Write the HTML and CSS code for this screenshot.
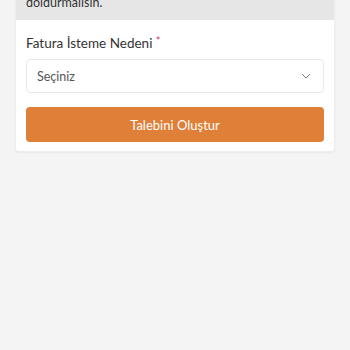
FILE: index.html
```html
<!DOCTYPE html>
<html lang="tr">
<head>
<meta charset="utf-8">
<link rel="stylesheet" href="styles.css">
</head>
<body>
<div class="card">
  <div class="notice"><p>Fatura talebinde bulunmak için aşağıdaki formu doldurmalısın.</p></div>
  <div class="form">
    <label class="label">Fatura İsteme Nedeni <span class="req">*</span></label>
    <div class="select">
      <span>Seçiniz</span>
      <svg class="chev" width="10" height="6" viewBox="0 0 10 6"><path d="M1 1l4 4 4-4" fill="none" stroke="#888" stroke-width="1"/></svg>
    </div>
    <button class="btn">Talebini Oluştur</button>
  </div>
</div>
</body>
</html>
```
FILE: styles.css
```css
html, body { margin: 0; padding: 0; }
body {
  background: #f4f4f4;
  font-family: Lato, "Open Sans", sans-serif;
  width: 350px;
  height: 350px;
  overflow: hidden;
}
.card {
  margin: 0 15px;
  background: #fff;
  border-radius: 0 0 4px 4px;
  box-shadow: 0 1px 2px rgba(0,0,0,0.05);
  border: 1px solid #ededed;
  border-top: none;
}
.notice {
  background: #e6e6e6;
  height: 20px;
  overflow: hidden;
  display: flex;
  flex-direction: column;
  justify-content: flex-end;
  padding: 0 10px 8px;
  box-sizing: border-box;
}
.notice p {
  margin: 0;
  font-size: 12.5px;
  line-height: 18px;
  color: #333;
}
.form {
  padding: 11px 10px 9px;
  display: flex;
  flex-direction: column;
}
.label {
  font-size: 13.5px;
  line-height: 19px;
  color: #333;
  margin-bottom: 6px;
}
.req { color: #d6405c; font-size: 11px; vertical-align: 3px; }
.select {
  height: 34px;
  box-sizing: border-box;
  border: 1px solid #e8e8e8;
  border-radius: 4px;
  display: flex;
  align-items: center;
  justify-content: space-between;
  padding: 0 11px 0 10px;
  font-size: 12.5px;
  color: #555;
  margin-bottom: 14px;
}
.chev { margin-right: 1px; }
.btn {
  height: 35px;
  border: none;
  border-radius: 4px;
  background: #e07f38;
  color: #fff;
  font-family: Lato, "Open Sans", sans-serif;
  font-size: 13px;
  padding: 0;
}
```
